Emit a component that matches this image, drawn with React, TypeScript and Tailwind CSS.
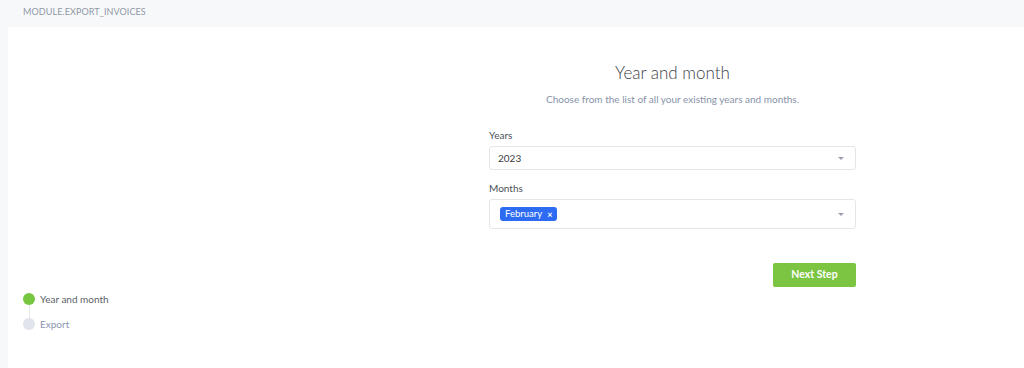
import React from "react";

function Caret() {
  return (
    <svg width="8" height="5" viewBox="0 0 8 5" className="shrink-0">
      <path d="M1 1 L7 1 L4 4 Z" fill="#9aa1ab" />
    </svg>
  );
}

export default function App() {
  return (
    <div
      className="w-[1024px] h-[368px] bg-[#f7f8fa] overflow-hidden flex flex-col"
      style={{ fontFamily: "Lato, 'Open Sans', sans-serif" }}
    >
      <div className="h-[27px] pl-[23px] pt-[6px] text-[9px] tracking-[0.1px] text-[#9199a6] leading-[12px]">
        MODULE.EXPORT_INVOICES
      </div>
      <div className="ml-[8px] flex-1 bg-white flex">
        <div className="w-[481px] flex flex-col pt-[266px] pl-[15px]">
          <div className="flex items-center gap-[5px] h-[12px]">
            <div className="w-[12px] h-[12px] rounded-full bg-[#76c63f]" />
            <span className="text-[10px] text-[#5a5f66]">Year and month</span>
          </div>
          <div className="w-[1px] h-[13px] bg-[#e4e7ec] ml-[5.5px]" />
          <div className="flex items-center gap-[5px] h-[12px]">
            <div className="w-[12px] h-[12px] rounded-full bg-[#e1e4ea]" />
            <span className="text-[10px] text-[#8c95b0]">Export</span>
          </div>
        </div>
        <div className="w-[367px] flex flex-col pt-[35px]">
          <div className="text-center text-[17px] font-light text-[#3c4047] leading-[22px]">
            Year and month
          </div>
          <div className="text-center text-[10px] text-[#8893a8] mt-[9px] leading-[12px]">
            Choose from the list of all your existing years and months.
          </div>
          <div className="text-[10px] text-[#4b5058] mt-[24px] leading-[12px]">Years</div>
          <div className="mt-[5px] h-[24px] border border-[#e3e6eb] rounded-[3px] flex items-center justify-between pl-[8px] pr-[10px]">
            <span className="text-[10px] text-[#3c4047]">2023</span>
            <Caret />
          </div>
          <div className="text-[10px] text-[#4b5058] mt-[12px] leading-[12px]">Months</div>
          <div className="mt-[5px] h-[30px] border border-[#e3e6eb] rounded-[3px] flex items-center justify-between pl-[10px] pr-[10px]">
            <span className="h-[14px] px-[5px] rounded-[3px] bg-[#2d6bf2] text-white text-[9.5px] flex items-center gap-[5px] leading-none">
              February
              <span className="text-[9px] font-bold">×</span>
            </span>
            <Caret />
          </div>
          <div className="flex justify-end mt-[34px]">
            <button className="w-[83px] h-[24px] rounded-[2px] bg-[#7bc543] text-white text-[10.5px] font-bold">
              Next Step
            </button>
          </div>
        </div>
      </div>
    </div>
  );
}
